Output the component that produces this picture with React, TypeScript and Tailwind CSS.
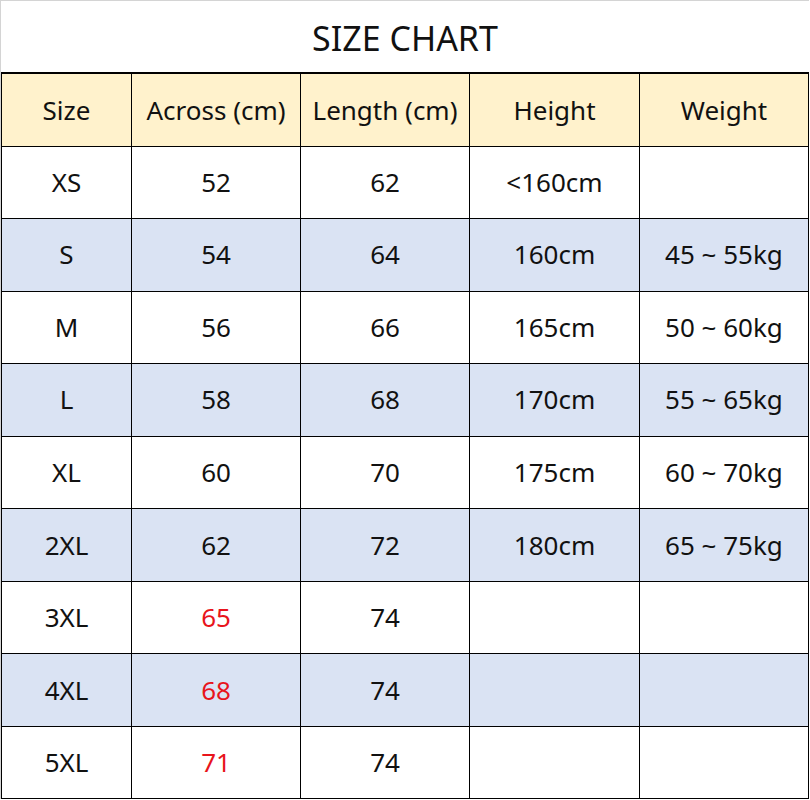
const headers = ["Size", "Across (cm)", "Length (cm)", "Height", "Weight"];

type Row = { size: string; across: string; length: string; height: string; weight: string; red?: boolean };

const rows: Row[] = [
  { size: "XS", across: "52", length: "62", height: "<160cm", weight: "" },
  { size: "S", across: "54", length: "64", height: "160cm", weight: "45 ~ 55kg" },
  { size: "M", across: "56", length: "66", height: "165cm", weight: "50 ~ 60kg" },
  { size: "L", across: "58", length: "68", height: "170cm", weight: "55 ~ 65kg" },
  { size: "XL", across: "60", length: "70", height: "175cm", weight: "60 ~ 70kg" },
  { size: "2XL", across: "62", length: "72", height: "180cm", weight: "65 ~ 75kg" },
  { size: "3XL", across: "65", length: "74", height: "", weight: "", red: true },
  { size: "4XL", across: "68", length: "74", height: "", weight: "", red: true },
  { size: "5XL", across: "71", length: "74", height: "", weight: "", red: true },
];

const grid = "grid grid-cols-[130px_169px_169px_170px_169px] border-l border-black";
const cell = "flex items-center justify-center border-r border-b border-black h-[72.55px]";

export default function App() {
  return (
    <main
      className="w-[810px] h-[800px] bg-white text-[#111] overflow-hidden"
      style={{ fontFamily: '"Noto Sans", "Open Sans", sans-serif' }}
    >
      <div className="w-[809px] border-l border-t border-[#d4d4d4]">
        <h1 className="h-[71px] flex items-center justify-center text-[34px] font-normal pt-1">
          SIZE CHART
        </h1>
        <div className="border-t-2 border-black">
          <div className={`${grid} bg-[#fff2cc]`}>
            {headers.map((h) => (
              <div key={h} className={`${cell} text-[26px] pt-0.5`}>
                {h}
              </div>
            ))}
          </div>
          {rows.map((r, i) => (
            <div key={r.size} className={`${grid} text-[26px] ${i % 2 === 1 ? "bg-[#dae3f3]" : "bg-white"}`}>
              <div className={cell}>{r.size}</div>
              <div className={`${cell} ${r.red ? "text-[#e8141c]" : ""}`}>{r.across}</div>
              <div className={cell}>{r.length}</div>
              <div className={cell}>{r.height}</div>
              <div className={cell}>{r.weight}</div>
            </div>
          ))}
        </div>
      </div>
    </main>
  );
}
